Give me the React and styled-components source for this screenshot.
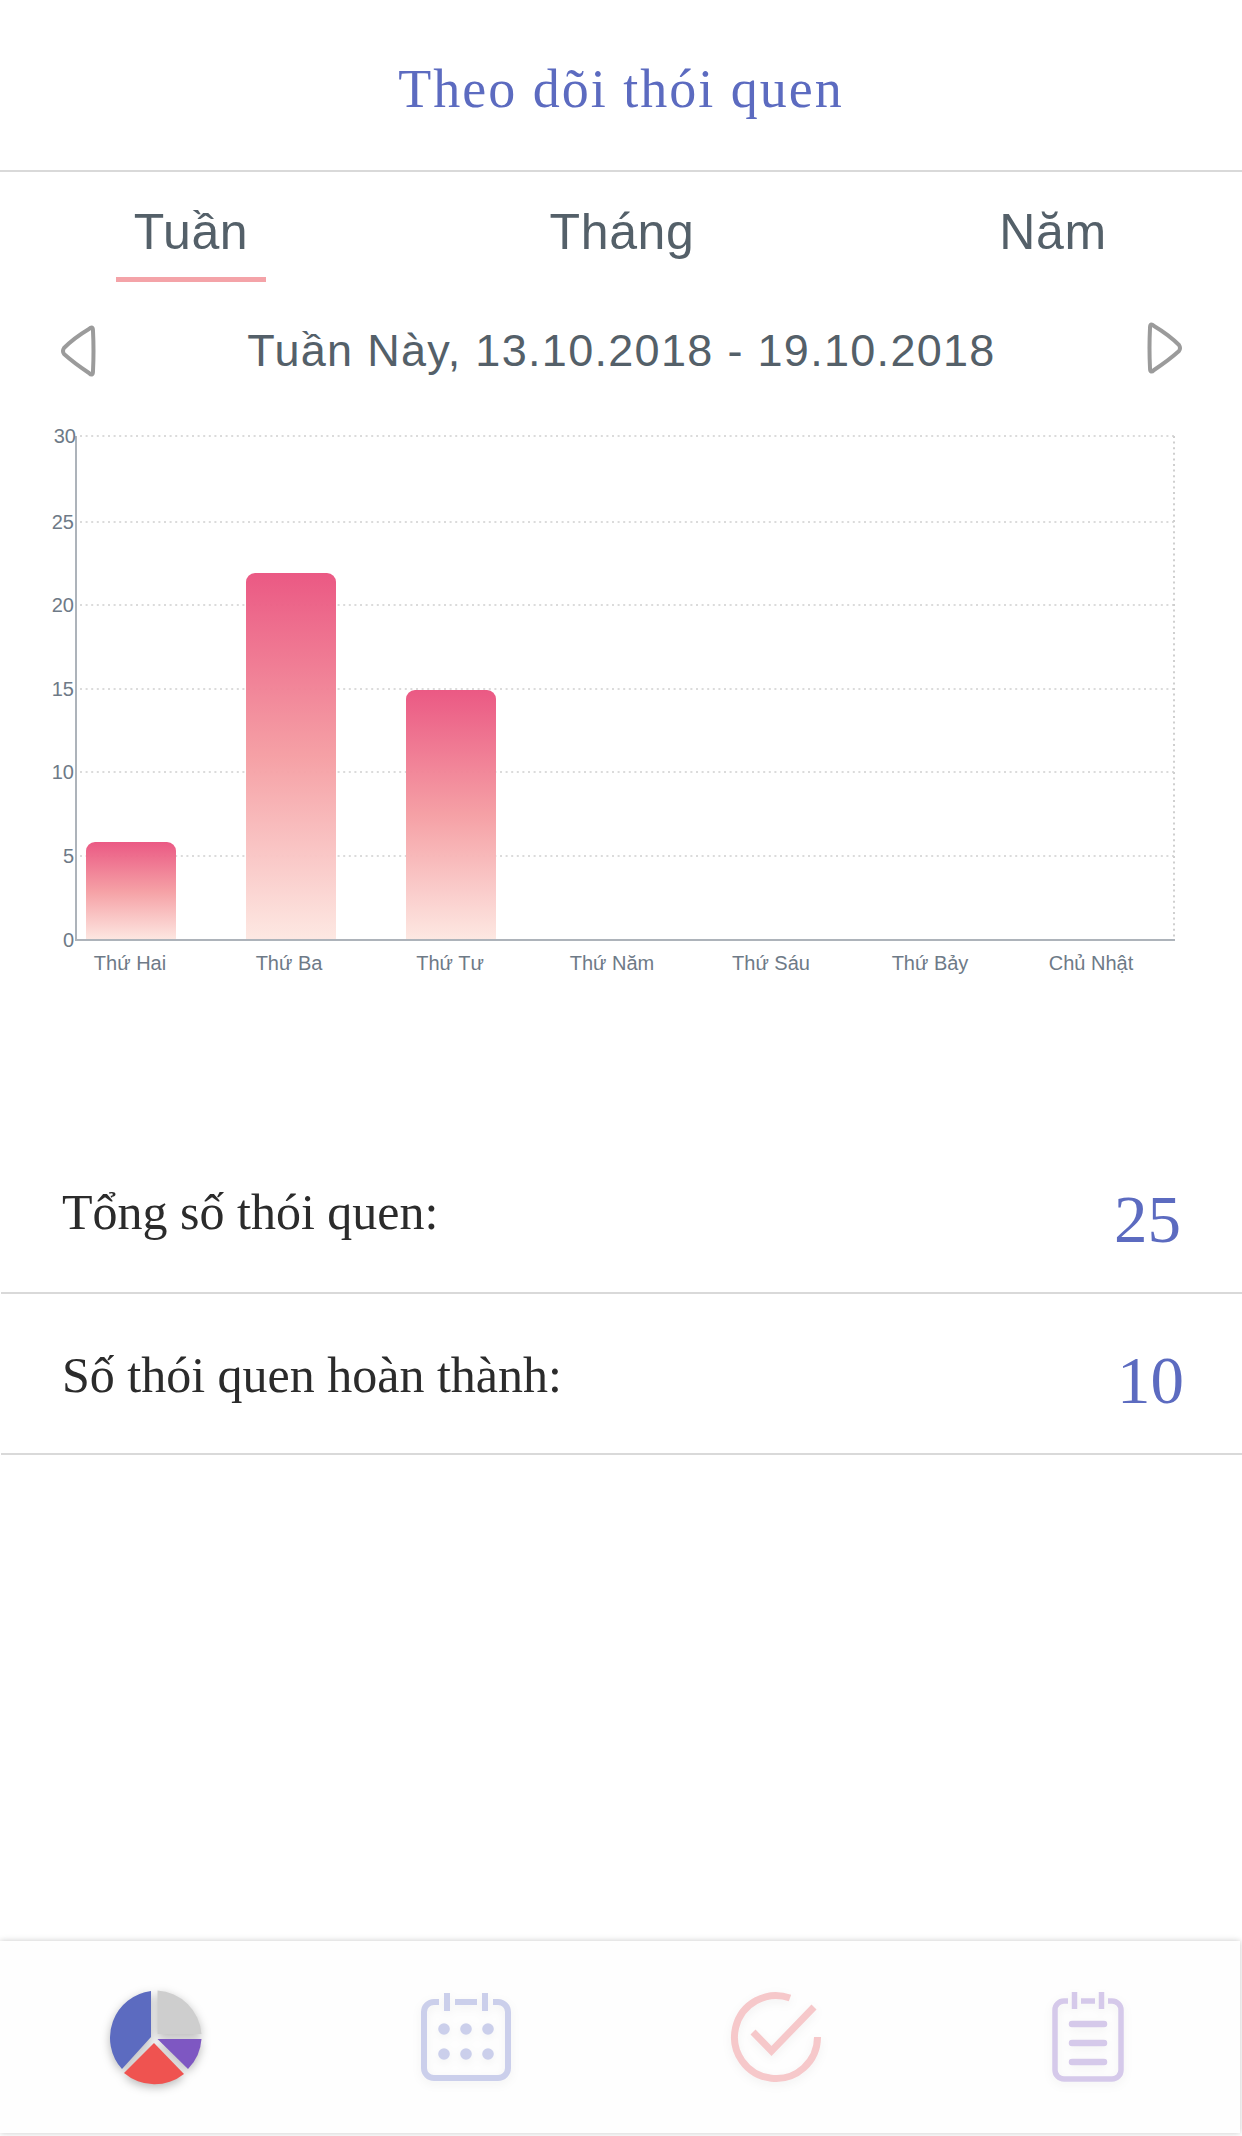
import styled, { createGlobalStyle } from "styled-components";

const GlobalStyle = createGlobalStyle`
  html, body {
    margin: 0;
    padding: 0;
    background: #fff;
  }
`;

const Page = styled.div`
  width: 1242px;
  height: 2136px;
  display: flex;
  flex-direction: column;
  overflow: hidden;
  font-family: "Liberation Sans", Arial, sans-serif;
`;

const Header = styled.header`
  height: 172px;
  box-sizing: border-box;
  border-bottom: 2px solid #d9d9d9;
  display: flex;
  justify-content: center;
`;

const Title = styled.h1`
  margin: 0;
  padding-top: 59px;
  font: 400 54px/60px "Liberation Serif", "Times New Roman", serif;
  letter-spacing: 2px;
  color: #5c6bc0;
`;

const Tabs = styled.nav`
  display: flex;
  justify-content: space-between;
  padding: 0 114px 0 116px;
`;

const Tab = styled.div`
  width: 150px;
  height: 110px;
  box-sizing: border-box;
  padding-top: 32px;
  text-align: center;
  font-size: 50px;
  line-height: 56px;
  letter-spacing: 0.6px;
  white-space: nowrap;
  color: #546069;
  border-bottom: 5px solid ${(p) => (p.$active ? "#f4a3a8" : "transparent")};
`;

const DateRow = styled.div`
  height: 118px;
  box-sizing: border-box;
  padding: 43px 59px 0 60px;
  display: flex;
  justify-content: space-between;
  align-items: flex-start;
`;

const DateLabel = styled.div`
  font-size: 45px;
  line-height: 52px;
  letter-spacing: 1.3px;
  color: #546069;
`;

const ArrowIcon = styled.svg`
  width: 36px;
  height: 52px;
  flex: none;
  margin-top: ${(p) => p.$lift || 0}px;
  fill: none;
  stroke: #9b9b9b;
  stroke-width: 4;
  stroke-linejoin: round;
`;

const ChartSvg = styled.svg`
  display: block;
  width: 1242px;
  height: 600px;
  flex: none;
  font-family: "Liberation Sans", Arial, sans-serif;
  font-size: 20px;
  fill: #6e7a87;
`;

const Stats = styled.section`
  margin-top: 133px;
`;

const StatRow = styled.div`
  height: 161px;
  box-sizing: border-box;
  margin-left: 1px;
  padding: 0 60px 0 61px;
  display: flex;
  justify-content: space-between;
  align-items: flex-start;
  border-bottom: 2px solid #d9d9d9;
  font-family: "Liberation Serif", "Times New Roman", serif;
`;

const StatLabel = styled.div`
  padding-top: ${(p) => p.$top}px;
  font-size: 50px;
  line-height: 56px;
  color: #2b2b2b;
`;

const StatValue = styled.div`
  padding-top: 46px;
  margin-right: ${(p) => p.$nudge}px;
  font-size: 67px;
  line-height: 80px;
  color: #5c6bc0;
`;

const BottomNav = styled.footer`
  margin-top: auto;
  margin-bottom: 3px;
  width: 1240px;
  height: 192px;
  flex: none;
  background: #fefefe;
  box-shadow: 0 0 6px rgba(0, 0, 0, 0.22);
  display: grid;
  grid-template-columns: repeat(4, 310.5px);
  align-items: center;
  justify-items: center;
`;

const NavIcon = styled.svg`
  display: block;
  width: ${(p) => p.$w}px;
  height: ${(p) => p.$h}px;
  fill: none;
  stroke-width: ${(p) => p.$stroke || 6};
  stroke: ${(p) => p.$color};
  filter: drop-shadow(0 3px 5px rgba(0, 0, 0, ${(p) => p.$shadow || 0.05}));
`;

const grid = [
  { label: 30, y: 436 },
  { label: 25, y: 522 },
  { label: 20, y: 605 },
  { label: 15, y: 689 },
  { label: 10, y: 772 },
  { label: 5, y: 856 },
  { label: 0, y: 940 },
];

const bars = [
  { x: 86, top: 842 },
  { x: 246, top: 573 },
  { x: 406, top: 690 },
];

const days = [
  { label: "Thứ Hai", x: 130 },
  { label: "Thứ Ba", x: 289 },
  { label: "Thứ Tư", x: 450 },
  { label: "Thứ Năm", x: 612 },
  { label: "Thứ Sáu", x: 771 },
  { label: "Thứ Bảy", x: 930 },
  { label: "Chủ Nhật", x: 1091 },
];

const Chart = () => (
  <ChartSvg viewBox="0 400 1242 600">
    <defs>
      <linearGradient id="barFill" x1="0" y1="0" x2="0" y2="1">
        <stop offset="0" stopColor="#ea5480" />
        <stop offset="0.5" stopColor="#f59ea3" />
        <stop offset="1" stopColor="#fde8e2" />
      </linearGradient>
    </defs>
    {grid.slice(0, -1).map((g) => (
      <line
        key={g.label}
        x1="80"
        x2="1175"
        y1={g.y}
        y2={g.y}
        stroke="#cfcfcf"
        strokeWidth="1.5"
        strokeDasharray="2 3.6"
      />
    ))}
    <line x1="1174" x2="1174" y1="436" y2="940" stroke="#cfcfcf" strokeWidth="2" strokeDasharray="2 3.6" />
    {bars.map((b) => (
      <path
        key={b.x}
        opacity="0.97"
        fill="url(#barFill)"
        d={`M${b.x} 941 V${b.top + 9} a9 9 0 0 1 9 -9 H${b.x + 81} a9 9 0 0 1 9 9 V941 Z`}
      />
    ))}
    <line x1="76" x2="76" y1="436" y2="940" stroke="#adb3ba" strokeWidth="2" />
    <line x1="75" x2="1175" y1="940" y2="940" stroke="#adb3ba" strokeWidth="2" />
    {grid.map((g) => (
      <text key={g.label} x={g.label === 30 ? 76 : 74} y={g.y + 7} textAnchor="end">
        {g.label}
      </text>
    ))}
    {days.map((d) => (
      <text key={d.label} x={d.x} y="970" textAnchor="middle">
        {d.label}
      </text>
    ))}
  </ChartSvg>
);

const PieIcon = () => (
  <NavIcon $w={100} $h={100} $color="none" $shadow={0.28} viewBox="1 0 100 100">
    <path fill="#cecece" d="M53.5 3.5 A47 47 0 0 1 97.5 47 H53.5 Z" />
    <path fill="#7e57c2" d="M53.5 52 H97.5 A47 47 0 0 1 84 82 Z" />
    <path fill="#ef5350" d="M50 56 L80 87 A47 47 0 0 1 20 86 Z" />
    <path fill="#5c6bc0" d="M47 4 V50 L18 82 A47 47 0 0 1 47 4 Z" />
  </NavIcon>
);

const CalendarIcon = () => (
  <NavIcon $w={96} $h={94} $color="#cbcfeb" viewBox="0 0 96 94">
    <path d="M21 12 H16 a10 10 0 0 0 -10 10 V78 a10 10 0 0 0 10 10 H80 a10 10 0 0 0 10 -10 V22 a10 10 0 0 0 -10 -10 H75" />
    <path d="M37 12 H59 M29 3 V21 M67 3 V21" />
    <g fill="#cbcfeb" stroke="none">
      {[26, 48, 70].map((x) =>
        [39, 64].map((y) => <circle key={`${x}-${y}`} cx={x} cy={y} r="5.8" />),
      )}
    </g>
  </NavIcon>
);

const CheckIcon = () => (
  <NavIcon $w={96} $h={96} $color="#f6c8ca" $stroke={7} viewBox="0 0 96 96">
    <path d="M89.5 48 A41.5 41.5 0 1 1 62 9" />
    <path d="M25 43 L43.5 62 L86 18" />
  </NavIcon>
);

const NoteIcon = () => (
  <NavIcon $w={80} $h={96} $color="#d5c9ea" $stroke={5.5} viewBox="-1 0 80 96">
    <path d="M20 12 H16 a9 9 0 0 0 -9 9 V81 a9 9 0 0 0 9 9 H64 a9 9 0 0 0 9 -9 V21 a9 9 0 0 0 -9 -9 H60" />
    <path d="M33 12 H47 M26.5 3 V20 M53.5 3 V20" />
    <path strokeWidth="6.5" strokeLinecap="round" d="M24 35 H56 M24 54 H56 M24 73 H56" />
  </NavIcon>
);

export default function App() {
  return (
    <>
      <GlobalStyle />
      <Page>
        <Header>
          <Title>Theo dõi thói quen</Title>
        </Header>
        <Tabs>
          <Tab $active>Tuần</Tab>
          <Tab>Tháng</Tab>
          <Tab>Năm</Tab>
        </Tabs>
        <DateRow>
          <ArrowIcon viewBox="0 0 36 52">
            <path d="M29 4 Q33 0 33 6 Q34 26 33 46 Q33 52 29 48 Q14 38 4 29 Q2 26 4 23 Q14 13 29 4 Z" />
          </ArrowIcon>
          <DateLabel>Tuần Này, 13.10.2018 - 19.10.2018</DateLabel>
          <ArrowIcon $lift={-3} viewBox="0 0 36 52">
            <path d="M7 4 Q3 0 3 6 Q2 26 3 46 Q3 52 7 48 Q22 38 32 29 Q34 26 32 23 Q22 13 7 4 Z" />
          </ArrowIcon>
        </DateRow>
        <Chart />
        <Stats>
          <StatRow>
            <StatLabel $top={51}>Tổng số thói quen:</StatLabel>
            <StatValue $nudge={1}>25</StatValue>
          </StatRow>
          <StatRow>
            <StatLabel $top={53}>Số thói quen hoàn thành:</StatLabel>
            <StatValue $nudge={-2}>10</StatValue>
          </StatRow>
        </Stats>
        <BottomNav>
          <PieIcon />
          <CalendarIcon />
          <CheckIcon />
          <NoteIcon />
        </BottomNav>
      </Page>
    </>
  );
}
